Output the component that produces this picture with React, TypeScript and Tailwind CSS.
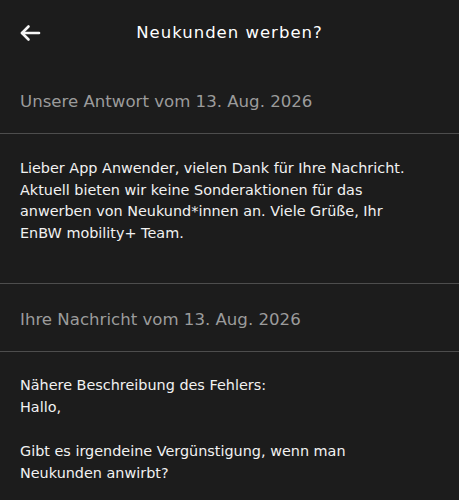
import React from 'react';

const font = { fontFamily: '"DejaVu Sans", "Liberation Sans", sans-serif' };

const BackArrow: React.FC = () => (
  <svg width="22" height="18" viewBox="0 0 22 18" fill="none" stroke="#f5f5f5" strokeWidth="2.6" strokeLinecap="round" strokeLinejoin="round">
    <path d="M20 9H3" />
    <path d="M9.5 2.5L3 9l6.5 6.5" />
  </svg>
);

const SectionHeading: React.FC<{ children: React.ReactNode }> = ({ children }) => (
  <div className="px-5 pt-[24px] pb-[19px] border-b border-[#4d4d4d]">
    <div className="text-[16.6px] leading-[24px] text-[#9b9b9b]">{children}</div>
  </div>
);

const App: React.FC = () => {
  return (
    <div className="min-h-[500px] w-full bg-[#1c1c1c] text-[#f2f2f2]" style={font}>
      {/* Header */}
      <div className="relative h-[66px] flex items-center justify-center">
        <div className="absolute left-[19px] top-[24px]">
          <BackArrow />
        </div>
        <h1 className="text-[16.5px] font-medium tracking-[1px] text-white">Neukunden werben?</h1>
      </div>

      <SectionHeading>Unsere Antwort vom 13. Aug. 2026</SectionHeading>
      <div className="px-5 pt-[24px] pb-[39px] border-b border-[#4d4d4d]">
        <p className="text-[14.4px] leading-[21.5px]">
          Lieber App Anwender, vielen Dank für Ihre Nachricht.
          <br />
          Aktuell bieten wir keine Sonderaktionen für das
          <br />
          anwerben von Neukund*innen an. Viele Grüße, Ihr
          <br />
          EnBW mobility+ Team.
        </p>
      </div>

      <SectionHeading>Ihre Nachricht vom 13. Aug. 2026</SectionHeading>
      <div className="px-5 pt-[22px] pb-6">
        <p className="text-[14.4px] leading-[22px]">
          Nähere Beschreibung des Fehlers:
          <br />
          Hallo,
          <br />
          <br />
          Gibt es irgendeine Vergünstigung, wenn man
          <br />
          Neukunden anwirbt?
        </p>
      </div>
    </div>
  );
};

export default App;
